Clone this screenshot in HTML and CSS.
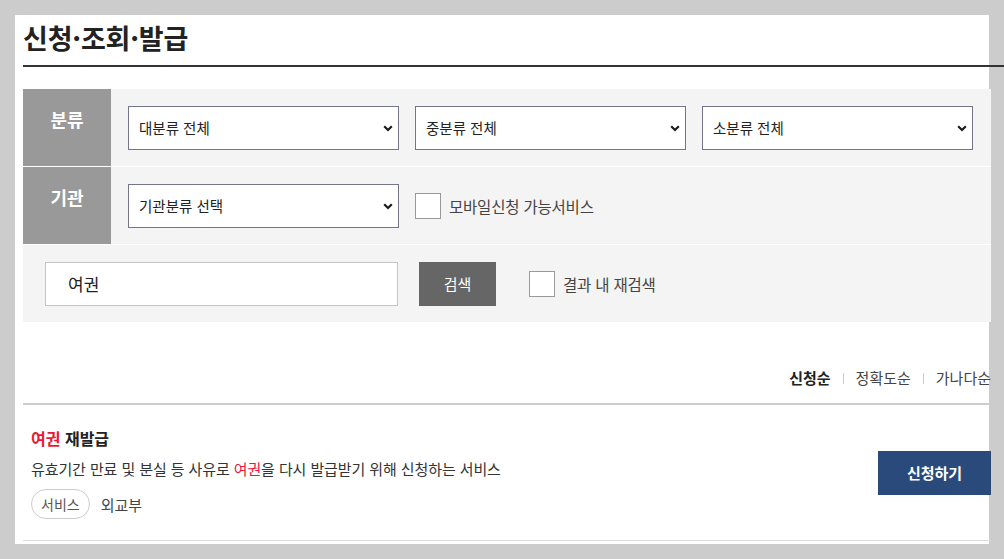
FILE: index.html
```html
<!DOCTYPE html>
<html lang="ko">
<head>
<meta charset="utf-8">
<title>신청·조회·발급</title>
<link rel="stylesheet" href="styles.css">
</head>
<body>
<div class="page">
  <h1 class="title">신청·조회·발급</h1>

  <div class="filter">
    <div class="frow">
      <div class="flabel">분류</div>
      <div class="fbody">
        <div class="sel"><span>대분류 전체</span><svg class="chev" width="10" height="7" viewBox="0 0 10 7"><path d="M1.2 1.3 L5 5 L8.8 1.3" fill="none" stroke="#1a1a1a" stroke-width="2.2"/></svg></div>
        <div class="sel"><span>중분류 전체</span><svg class="chev" width="10" height="7" viewBox="0 0 10 7"><path d="M1.2 1.3 L5 5 L8.8 1.3" fill="none" stroke="#1a1a1a" stroke-width="2.2"/></svg></div>
        <div class="sel"><span>소분류 전체</span><svg class="chev" width="10" height="7" viewBox="0 0 10 7"><path d="M1.2 1.3 L5 5 L8.8 1.3" fill="none" stroke="#1a1a1a" stroke-width="2.2"/></svg></div>
      </div>
    </div>
    <div class="frow">
      <div class="flabel">기관</div>
      <div class="fbody">
        <div class="sel"><span>기관분류 선택</span><svg class="chev" width="10" height="7" viewBox="0 0 10 7"><path d="M1.2 1.3 L5 5 L8.8 1.3" fill="none" stroke="#1a1a1a" stroke-width="2.2"/></svg></div>
        <label class="chk"><span class="box"></span><span class="chk-text">모바일신청 가능서비스</span></label>
      </div>
    </div>
    <div class="frow last">
      <div class="fbody search">
        <div class="input">여권</div>
        <div class="btn-search">검색</div>
        <label class="chk chk-re"><span class="box"></span><span class="chk-text">결과 내 재검색</span></label>
      </div>
    </div>
  </div>

  <div class="sort">
    <span class="on">신청순</span>
    <span class="sep"></span>
    <span>정확도순</span>
    <span class="sep"></span>
    <span>가나다순</span>
  </div>

  <div class="item">
    <div class="info">
      <div class="it-title"><em>여권</em> 재발급</div>
      <div class="it-desc">유효기간 만료 및 분실 등 사유로 <em>여권</em>을 다시 발급받기 위해 신청하는 서비스</div>
      <div class="it-meta"><span class="pill">서비스</span><span class="org">외교부</span></div>
    </div>
    <div class="btn-apply">신청하기</div>
  </div>
</div>
</body>
</html>
```
FILE: styles.css
```css
html, body {
  margin: 0;
  padding: 0;
}
body {
  background: #cccccc;
  font-family: "Noto Sans CJK KR", "Noto Sans", sans-serif;
  color: #222;
  width: 1004px;
  height: 559px;
  overflow: hidden;
}
.page {
  margin: 15px 0 0 15px;
  width: 974px;
  height: 529px;
  background: #fff;
  padding-left: 8px;
  box-sizing: border-box;
}
.title {
  margin: 0;
  width: 981px;
  padding: 8px 0 12px 0;
  font-size: 27px;
  font-weight: 700;
  line-height: 30px;
  color: #222;
  border-bottom: 2px solid #333;
  letter-spacing: -0.2px;
}
.filter {
  margin-top: 22px;
  width: 968px;
  background: #f4f4f4;
}
.frow {
  display: flex;
  height: 77px;
  border-bottom: 1px solid #fff;
}
.frow.last {
  border-bottom: none;
}
.flabel {
  width: 88px;
  flex: none;
  background: #999;
  color: #fff;
  font-size: 18px;
  font-weight: 700;
  text-align: center;
  padding-top: 18px;
  line-height: 24px;
  box-sizing: border-box;
}
.fbody {
  display: flex;
  align-items: center;
  gap: 16px;
  padding: 0 17px;
}
.sel {
  position: relative;
  width: 271px;
  height: 44px;
  box-sizing: border-box;
  background: #fff;
  border: 1px solid #74748a;
  padding-left: 10px;
  display: flex;
  align-items: center;
  font-size: 14.5px;
  color: #222;
}
.sel .chev {
  position: absolute;
  right: 5px;
  top: 18px;
}
.chk {
  display: flex;
  align-items: center;
  gap: 8px;
}
.box {
  width: 26px;
  height: 26px;
  box-sizing: border-box;
  background: #fff;
  border: 1px solid #999;
}
.chk-text {
  font-size: 15.5px;
  color: #444;
  letter-spacing: -0.2px;
}
.search {
  padding-left: 22px;
  gap: 0;
}
.input {
  width: 353px;
  height: 44px;
  box-sizing: border-box;
  background: #fff;
  border: 1px solid #c4c4c4;
  padding-left: 22px;
  display: flex;
  align-items: center;
  font-size: 17px;
  color: #222;
}
.btn-search {
  margin-left: 21px;
  width: 77px;
  height: 44px;
  background: #666;
  color: #fff;
  font-size: 15px;
  display: flex;
  align-items: center;
  justify-content: center;
}
.chk-re {
  margin-left: 33px;
}
.sort {
  width: 968px;
  display: flex;
  justify-content: flex-end;
  align-items: center;
  padding: 45px 0 14px 0;
  line-height: 22px;
  font-size: 15px;
  color: #444;
  border-bottom: 2px solid #ccc;
}
.sort .on {
  font-weight: 700;
  color: #222;
}
.sort .sep {
  width: 1px;
  height: 11px;
  background: #ccc;
  margin: 0 12px;
}
.item {
  width: 968px;
  box-sizing: border-box;
  display: flex;
  align-items: center;
  justify-content: space-between;
  padding: 21px 0 21px 8px;
  border-bottom: 1px solid #ddd;
}
.item em {
  font-style: normal;
  color: #e8173a;
}
.it-title {
  font-size: 16px;
  font-weight: 700;
  line-height: 24px;
  color: #222;
}
.it-desc {
  margin-top: 8px;
  font-size: 15px;
  line-height: 22px;
  color: #333;
  letter-spacing: -0.1px;
}
.it-meta {
  margin-top: 9px;
  display: flex;
  align-items: center;
}
.pill {
  height: 30px;
  box-sizing: border-box;
  padding: 0 9px;
  border: 1px solid #ccc;
  border-radius: 15px;
  font-size: 14px;
  line-height: 28px;
  color: #555;
}
.org {
  margin-left: 11px;
  font-size: 15px;
  color: #444;
}
.btn-apply {
  width: 113px;
  height: 44px;
  background: #2a4a7c;
  color: #fff;
  font-size: 15px;
  font-weight: 700;
  display: flex;
  align-items: center;
  justify-content: center;
}
```
